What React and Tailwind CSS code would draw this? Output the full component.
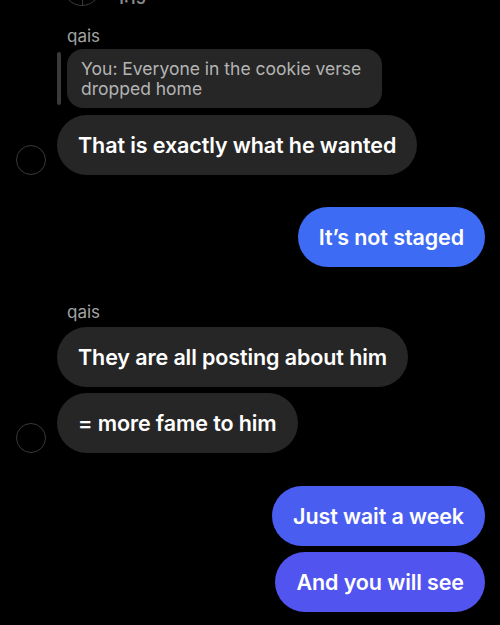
import React from "react";

const Avatar = ({ show }) => (
  <div className="w-[30px] h-[30px] shrink-0">
    {show && <div className="w-[30px] h-[30px] rounded-full border border-[#3a3a3a]" />}
  </div>
);

const TheirBubble = ({ text, avatar }) => (
  <div className="flex items-end gap-[11px] pl-4">
    <Avatar show={avatar} />
    <div className="h-[60px] rounded-full bg-[#262626] px-[21px] flex items-center text-white text-[21.5px] font-semibold tracking-[-0.1px]">
      {text}
    </div>
  </div>
);

const MyBubble = ({ text, color }) => (
  <div className="flex justify-end pr-[15px]">
    <div
      className={`h-[60px] rounded-full px-[21px] flex items-center text-white text-[21.5px] font-semibold tracking-[-0.1px] ${color}`}
    >
      {text}
    </div>
  </div>
);

const Name = ({ children }) => (
  <div className="pl-[67px] text-[17px] text-[#a3a3a3] leading-[17px]">{children}</div>
);

export default function App() {
  return (
    <div
      className="w-[500px] h-[625px] bg-black overflow-hidden"
      style={{ fontFamily: "Inter, 'Noto Sans', sans-serif" }}
    >
      {/* cut-off item from above */}
      <div className="h-[8px] overflow-hidden relative">
        <div className="absolute left-[63px] top-[-32px] w-[38px] h-[38px] rounded-full border border-[#3a3a3a]">
          <div className="absolute left-1/2 top-0 bottom-0 w-px bg-[#3a3a3a]" />
        </div>
        <div className="absolute left-[117px] top-[-14px] text-[#8a8a8a] text-[16px] font-semibold">1:15</div>
      </div>

      <div className="mt-[20px]">
        <Name>qais</Name>
      </div>

      <div className="mt-[4px] flex pl-[57px] gap-[6px] items-stretch">
        <div className="w-[4px] my-[3px] rounded-full bg-[#3a3a3a]" />
        <div className="rounded-[16px] bg-[#262626] px-[14px] py-[10px] text-[#b4b4b4] text-[17.5px] leading-[19.5px] w-[315px]">
          You: Everyone in the cookie verse dropped home
        </div>
      </div>

      <div className="mt-[7px]">
        <TheirBubble text="That is exactly what he wanted" avatar />
      </div>

      <div className="mt-[32px]">
        <MyBubble text="It’s not staged" color="bg-[#3d6bf4]" />
      </div>

      <div className="mt-[37px]">
        <Name>qais</Name>
      </div>

      <div className="mt-[6px] flex flex-col gap-[6px]">
        <TheirBubble text="They are all posting about him" />
        <TheirBubble text="= more fame to him" avatar />
      </div>

      <div className="mt-[33px] flex flex-col gap-[6px]">
        <MyBubble text="Just wait a week" color="bg-[#4a5df1]" />
        <MyBubble text="And you will see" color="bg-[#5154ee]" />
      </div>
    </div>
  );
}
